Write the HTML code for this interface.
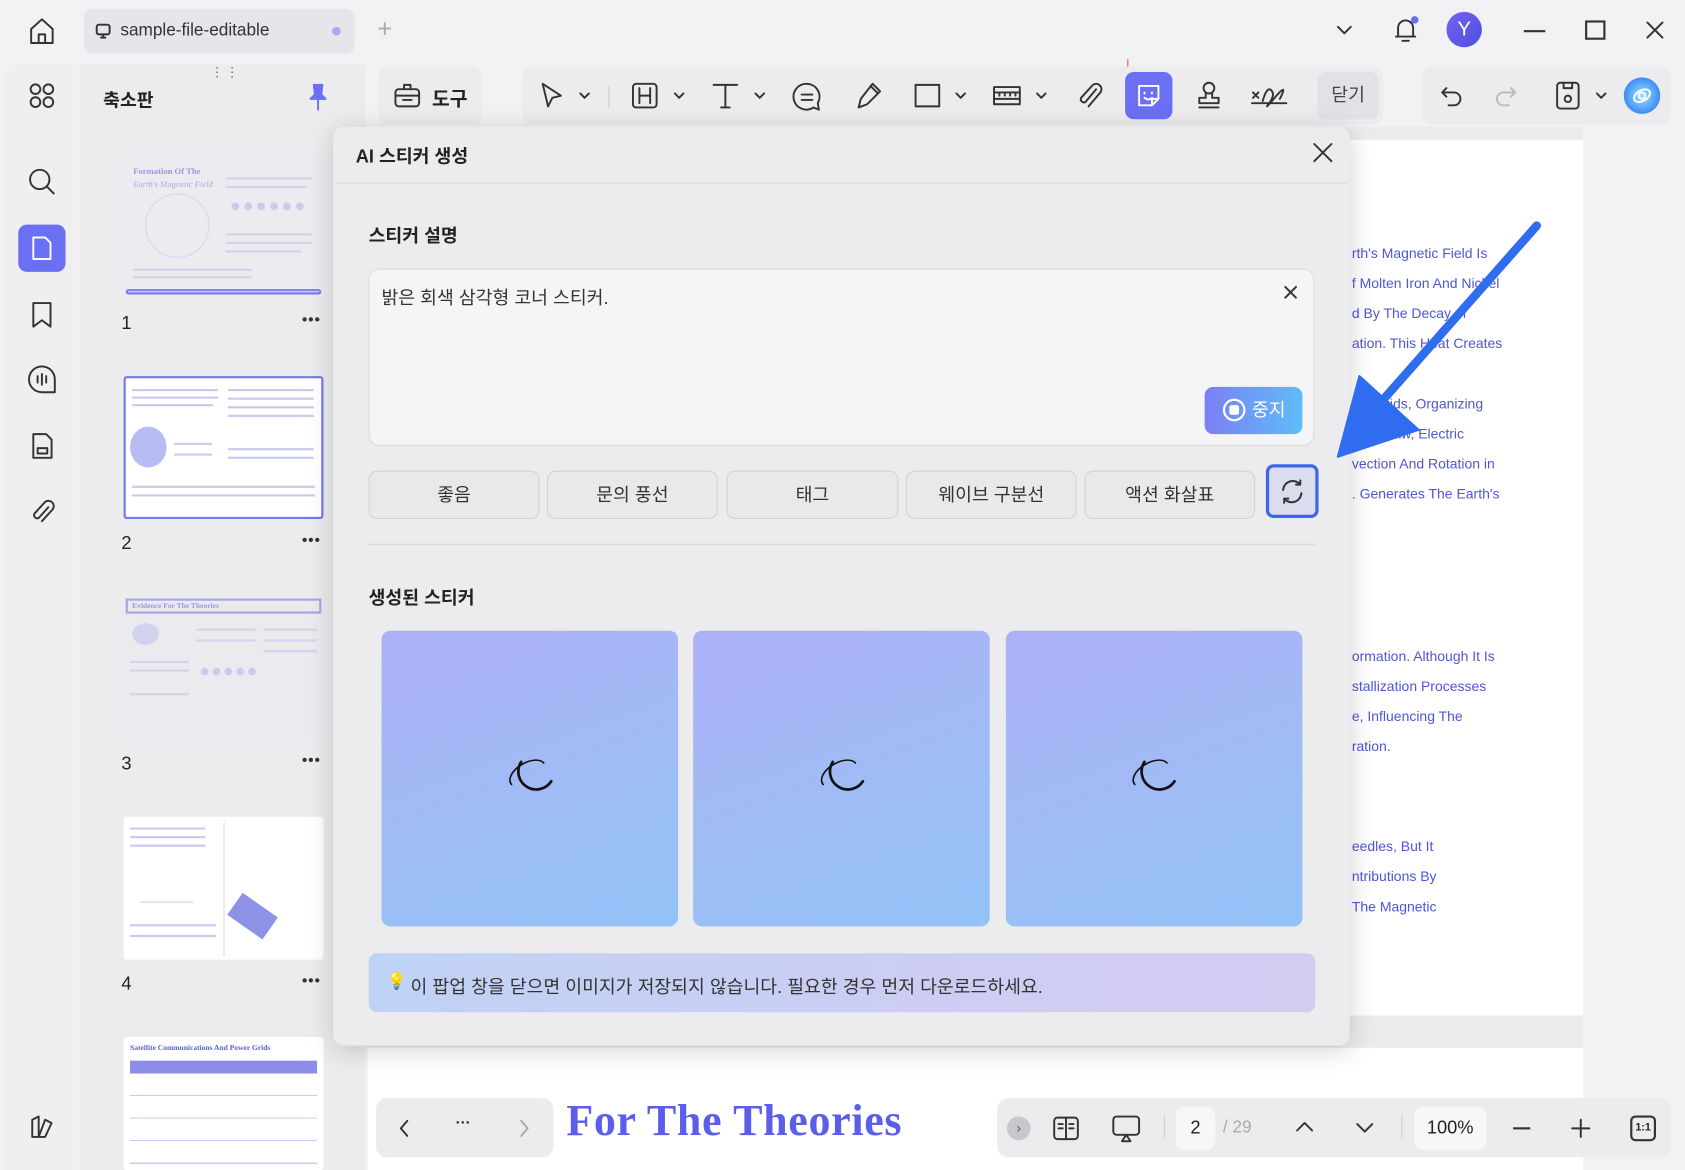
<!DOCTYPE html>
<html><head><meta charset="utf-8"><style>
*{box-sizing:border-box;margin:0;padding:0}
html,body{width:1685px;height:1170px;overflow:hidden;background:#f2f2f4}
#w{position:absolute;left:0;top:0;width:1568px;height:1089px;transform:scale(1.07462);transform-origin:0 0;font-family:"Liberation Sans","Noto Sans CJK KR",sans-serif;color:#222;background:#f2f2f4}
.a{position:absolute}
svg{position:absolute;fill:none;stroke:#333;stroke-width:1.8;stroke-linecap:round;stroke-linejoin:round}
.chip{position:absolute;top:438px;width:159px;height:45px;border:1px solid #d2d2d6;border-radius:8px;background:#e9e9ec;font-size:17px;text-align:center;line-height:44px;color:#333}
.img{position:absolute;top:587px;width:276px;height:275px;border-radius:8px;background:linear-gradient(160deg,#aeb0f6,#9ebdf6 60%,#93c2f7)}
.dt{position:absolute;left:1258px;font-size:13px;color:#4f55d6;white-space:nowrap}
.th{position:absolute;left:115px;width:186px;background:#fff;border-radius:3px;overflow:hidden}
.ln{position:absolute;height:2px;background:#c9cbee}
.num{position:absolute;left:113px;font-size:17px;color:#222}
.dots{position:absolute;left:281px;font-size:14px;letter-spacing:1px;font-weight:bold;color:#333}
.fog{position:absolute;left:0;top:0;right:0;bottom:0;background:rgba(225,225,230,.45)}
</style></head><body><div id="w">
<svg style="left:25px;top:15px" width="28" height="28" viewBox="0 0 28 28"><path d="M4 12 L14 3 L24 12 V25 H4 Z M11 25 V17 H17 V25"/></svg>
<div class="a" style="left:78px;top:8px;width:252px;height:42px;background:#e6e6ea;border-radius:8px"></div>
<svg style="left:88px;top:21px" width="16" height="16" viewBox="0 0 16 16"><rect x="2" y="2" width="12" height="9" rx="2"/><path d="M6 14h4M8 11v3"/></svg>
<div class="a" style="left:112px;top:20px;font-size:16px;color:#333">sample-file-editable</div>
<div class="a" style="left:309px;top:25px;width:8px;height:8px;border-radius:50%;background:#a9a9f4"></div>
<div class="a" style="left:351px;top:14px;font-size:24px;color:#aaa;font-weight:300">+</div>
<svg style="left:1242px;top:20px" width="18" height="16" viewBox="0 0 18 16"><path d="M3 5l6 6 6-6"/></svg>
<svg style="left:1295px;top:14px" width="26" height="28" viewBox="0 0 26 28"><path d="M6 20V12a7 7 0 0 1 14 0v8H4h18M10 24h6"/></svg>
<div class="a" style="left:1313px;top:15px;width:7px;height:7px;border-radius:50%;background:#6b6ff2"></div>
<div class="a" style="left:1346px;top:11px;width:33px;height:33px;border-radius:50%;background:linear-gradient(135deg,#7a5ff0,#4a52e0);color:#fff;font-size:19px;text-align:center;line-height:33px">Y</div>
<div class="a" style="left:1418px;top:28px;width:20px;height:2px;background:#333"></div>
<div class="a" style="left:1475px;top:19px;width:19px;height:18px;border:2px solid #333"></div>
<svg style="left:1530px;top:18px" width="20" height="20" viewBox="0 0 20 20"><path d="M3 3l14 14M17 3L3 17"/></svg>

<div class="a" style="left:6px;top:60px;width:66px;height:1029px;background:#efeff2;border-radius:10px 10px 0 0"></div>
<svg style="left:26px;top:76px" width="26" height="26" viewBox="0 0 26 26"><circle cx="7" cy="7" r="4.5"/><circle cx="19" cy="7" r="4.5"/><circle cx="7" cy="19" r="4.5"/><circle cx="19" cy="19" r="4.5"/></svg>
<svg style="left:25px;top:155px" width="28" height="28" viewBox="0 0 28 28"><circle cx="12" cy="12" r="9"/><path d="M19 19l6 6"/></svg>
<div class="a" style="left:17px;top:209px;width:44px;height:44px;border-radius:8px;background:#6a6ff3"></div>
<svg style="left:27px;top:218px;stroke:#fff" width="24" height="26" viewBox="0 0 24 26"><path d="M4 3h11l5 5v15H4z"/></svg>
<svg style="left:27px;top:279px" width="24" height="28" viewBox="0 0 24 28"><path d="M4 3h16v22l-8-6-8 6z"/></svg>
<svg style="left:24px;top:338px" width="30" height="30" viewBox="0 0 30 30"><path d="M15 3a12 12 0 1 0 0 24h12V15A12 12 0 0 0 15 3zM11 12v6M15 10v10M19 12v6"/></svg>
<svg style="left:26px;top:401px" width="26" height="28" viewBox="0 0 26 28"><path d="M5 3h12l5 5v17H5zM9 16h9v5H9z"/></svg>
<svg style="left:26px;top:462px" width="26" height="28" viewBox="0 0 26 28"><path d="M19 10L10 20a3 3 0 0 1-4-4L16 5a5 5 0 0 1 7 7L13 23"/></svg>
<svg style="left:26px;top:1036px" width="26" height="26" viewBox="0 0 26 26"><path d="M4 22V6l6-3v19zM10 22l6-16 6 3-6 13z"/></svg>

<div class="a" style="left:74px;top:60px;width:266px;height:1029px;background:#ececef"></div>
<div class="a" style="left:196px;top:60px;font-size:12px;color:#666;letter-spacing:2px">⋮⋮</div>
<div class="a" style="left:96px;top:79px;font-size:17px;font-weight:bold">축소판</div>
<svg style="left:286px;top:76px;stroke:#6a6ff3;fill:#6a6ff3" width="20" height="28" viewBox="0 0 20 28"><path d="M6 3h8l-1 9 4 4H3l4-4zM10 16v10"/></svg>

<div class="th" style="top:145px;height:130px;background:#f4f4f8">
 <div class="a" style="left:9px;top:10px;font:bold 8px 'Liberation Serif';color:#5a5fd8">Formation Of The</div>
 <div class="a" style="left:9px;top:22px;font:italic 8px 'Liberation Serif';color:#7c80e0">Earth's Magnetic Field</div>
 <div class="a" style="left:20px;top:35px;width:60px;height:60px;border-radius:50%;border:1px solid #cfd0ec"></div>
 <div class="ln" style="left:95px;top:20px;width:80px"></div><div class="ln" style="left:95px;top:28px;width:75px"></div>
 <div class="a" style="left:98px;top:42px;width:70px;height:10px;background:radial-gradient(circle,#b6b8f0 3px,transparent 4px) 0 0/12px 10px"></div>
 <div class="ln" style="left:95px;top:72px;width:80px"></div><div class="ln" style="left:95px;top:80px;width:80px"></div><div class="ln" style="left:95px;top:88px;width:70px"></div>
 <div class="ln" style="left:9px;top:105px;width:110px"></div><div class="ln" style="left:9px;top:112px;width:110px"></div>
 <div class="fog"></div>
 <div class="a" style="left:2px;top:124px;width:182px;height:5px;border:2px solid #7a7ee8;border-radius:3px"></div>
</div>
<div class="num" style="top:291px">1</div><div class="dots" style="top:289px">•••</div>

<div class="th" style="top:350px;height:133px;border:2px solid #7478e8">
 <div class="ln" style="left:6px;top:10px;width:80px"></div><div class="ln" style="left:6px;top:17px;width:80px"></div><div class="ln" style="left:6px;top:24px;width:75px"></div>
 <div class="a" style="left:4px;top:45px;width:34px;height:38px;border-radius:50%;background:#b9bcf3"></div>
 <div class="ln" style="left:45px;top:60px;width:35px"></div><div class="ln" style="left:45px;top:70px;width:35px"></div>
 <div class="ln" style="left:95px;top:10px;width:80px"></div><div class="ln" style="left:95px;top:18px;width:80px"></div><div class="ln" style="left:95px;top:26px;width:80px"></div><div class="ln" style="left:95px;top:34px;width:80px"></div>
 <div class="ln" style="left:95px;top:65px;width:80px"></div><div class="ln" style="left:95px;top:73px;width:80px"></div>
 <div class="ln" style="left:6px;top:100px;width:170px"></div><div class="ln" style="left:6px;top:108px;width:170px"></div>
</div>
<div class="num" style="top:496px">2</div><div class="dots" style="top:494px">•••</div>

<div class="th" style="top:555px;height:133px;background:#f2f2f6">
 <div class="a" style="left:2px;top:2px;width:182px;height:14px;border:2px solid #7478e8;font:bold 7px 'Liberation Serif';color:#5a5fd8;padding:1px 4px">Evidence For The Theories</div>
 <div class="a" style="left:8px;top:25px;width:25px;height:20px;border-radius:50%;background:#c5c7f3"></div>
 <div class="ln" style="left:6px;top:60px;width:55px"></div><div class="ln" style="left:6px;top:68px;width:55px"></div><div class="ln" style="left:6px;top:90px;width:55px"></div>
 <div class="ln" style="left:68px;top:30px;width:55px"></div><div class="ln" style="left:68px;top:40px;width:55px"></div>
 <div class="a" style="left:70px;top:65px;width:55px;height:10px;background:radial-gradient(circle,#b6b8f0 3px,transparent 4px) 0 0/11px 10px"></div>
 <div class="ln" style="left:130px;top:30px;width:50px"></div><div class="ln" style="left:130px;top:40px;width:50px"></div><div class="ln" style="left:130px;top:50px;width:50px"></div>
 <div class="fog"></div>
</div>
<div class="num" style="top:701px">3</div><div class="dots" style="top:699px">•••</div>

<div class="th" style="top:760px;height:133px">
 <div class="ln" style="left:6px;top:10px;width:70px"></div><div class="ln" style="left:6px;top:18px;width:70px"></div><div class="ln" style="left:6px;top:26px;width:70px"></div>
 <div class="a" style="left:15px;top:55px;width:50px;height:25px;border-bottom:1px solid #c9cbee"></div>
 <div class="a" style="left:93px;top:5px;width:1px;height:125px;background:#ddd"></div>
 <div class="a" style="left:100px;top:80px;width:40px;height:25px;background:#8e92e6;transform:rotate(35deg)"></div>
 <div class="ln" style="left:6px;top:100px;width:80px"></div><div class="ln" style="left:6px;top:110px;width:80px"></div>
</div>
<div class="num" style="top:906px">4</div><div class="dots" style="top:904px">•••</div>

<div class="th" style="top:965px;height:124px">
 <div class="a" style="left:6px;top:6px;font:bold 7px 'Liberation Serif';color:#5a5fd8">Satellite Communications And Power Grids</div>
 <div class="a" style="left:6px;top:22px;width:174px;height:12px;background:#8a8ee8"></div>
 <div class="a" style="left:6px;top:34px;width:174px;height:90px;background:repeating-linear-gradient(#fff 0 20px,#c9cbee 20px 21px)"></div>
</div>

<div class="a" style="left:342px;top:118px;width:1131px;height:971px;background:#ebebee"></div>
<div class="a" style="left:1236px;top:130px;width:237px;height:815px;background:#fff"></div>
<div class="a" style="left:342px;top:975px;width:1131px;height:114px;background:#fff"></div>
<div class="a" style="left:1049px;top:55px;width:1px;height:8px;background:#e06040"></div>
<div class="dt" style="top:228px">rth's Magnetic Field Is</div>
<div class="dt" style="top:256px">f Molten Iron And Nickel</div>
<div class="dt" style="top:284px">d By The Decay of</div>
<div class="dt" style="top:312px">ation. This Heat Creates</div>
<div class="dt" style="top:368px">ve Fluids, Organizing</div>
<div class="dt" style="top:396px">ere's Law, Electric</div>
<div class="dt" style="top:424px">vection And Rotation in</div>
<div class="dt" style="top:452px">. Generates The Earth's</div>
<div class="dt" style="top:603px">ormation. Although It Is</div>
<div class="dt" style="top:631px">stallization Processes</div>
<div class="dt" style="top:659px">e, Influencing The</div>
<div class="dt" style="top:687px">ration.</div>
<div class="dt" style="top:780px">eedles, But It</div>
<div class="dt" style="top:808px">ntributions By</div>
<div class="dt" style="top:836px">The Magnetic</div>
<div class="a" style="left:527px;top:1018px;font:bold 41px 'Liberation Serif',serif;color:#5a5ee8;letter-spacing:0.6px">For The Theories</div>

<div class="a" style="left:352px;top:62px;width:97px;height:54px;background:#ececef;border-radius:10px"></div>
<svg style="left:365px;top:74px" width="28" height="28" viewBox="0 0 28 28"><rect x="3" y="9" width="22" height="16" rx="3"/><path d="M3 15h22M11 9V5h6v4M10 19h8"/></svg>
<div class="a" style="left:402px;top:78px;font-size:18px;font-weight:bold">도구</div>
<div class="a" style="left:486px;top:62px;width:801px;height:54px;background:#ececef;border-radius:10px"></div>
<svg style="left:500px;top:75px" width="28" height="28" viewBox="0 0 28 28"><path d="M5 3l17 11-8 2-4 8z"/></svg>
<svg style="left:538px;top:84px" width="12" height="10" viewBox="0 0 12 10"><path d="M2 3l4 4 4-4"/></svg>
<div class="a" style="left:566px;top:80px;width:1px;height:20px;background:#ccc"></div>
<svg style="left:586px;top:75px" width="28" height="28" viewBox="0 0 28 28"><rect x="3" y="3" width="22" height="22" rx="3"/><path d="M9 7v14M19 7v14M9 14h10"/></svg>
<svg style="left:626px;top:84px" width="12" height="10" viewBox="0 0 12 10"><path d="M2 3l4 4 4-4"/></svg>
<svg style="left:661px;top:75px" width="28" height="28" viewBox="0 0 28 28"><path d="M3 4h22M14 4v21M10 25h8"/></svg>
<svg style="left:701px;top:84px" width="12" height="10" viewBox="0 0 12 10"><path d="M2 3l4 4 4-4"/></svg>
<svg style="left:736px;top:75px" width="30" height="30" viewBox="0 0 30 30"><path d="M15 3a12 12 0 1 0 6 22l5 2-1-6A12 12 0 0 0 15 3zM10 13h10M10 18h10"/></svg>
<svg style="left:794px;top:75px" width="28" height="28" viewBox="0 0 28 28"><path d="M18 3l7 7-12 12-8 3 2-8zM16 5l7 7"/></svg>
<svg style="left:849px;top:75px" width="28" height="28" viewBox="0 0 28 28"><rect x="3" y="4" width="22" height="20"/></svg>
<svg style="left:888px;top:84px" width="12" height="10" viewBox="0 0 12 10"><path d="M2 3l4 4 4-4"/></svg>
<svg style="left:922px;top:75px" width="30" height="28" viewBox="0 0 30 28"><rect x="3" y="6" width="24" height="16"/><path d="M3 11h24M3 17h24M8 11v3M13 11v3M18 11v3M23 11v3"/></svg>
<svg style="left:963px;top:84px" width="12" height="10" viewBox="0 0 12 10"><path d="M2 3l4 4 4-4"/></svg>
<svg style="left:1000px;top:75px" width="28" height="28" viewBox="0 0 28 28"><path d="M20 8L10 20a3 3 0 0 1-4-4L17 4a5 5 0 0 1 7 7L13 24"/></svg>
<div class="a" style="left:1047px;top:67px;width:44px;height:44px;border-radius:8px;background:#6a6ff3"></div>
<svg style="left:1055px;top:75px;stroke:#fff" width="28" height="28" viewBox="0 0 28 28"><path d="M5 5h18v12l-6 6H5zM23 17h-6v6M10 11v1M17 11v1M10 16q4 3 7 0"/></svg>
<svg style="left:1111px;top:74px" width="28" height="30" viewBox="0 0 28 30"><circle cx="14" cy="8" r="5"/><path d="M11 13v4H5v5h18v-5h-6v-4M5 26h18"/></svg>
<svg style="left:1163px;top:74px" width="36" height="30" viewBox="0 0 36 30"><path d="M3 12l5 5M8 12l-5 5M2 22h32M12 20q4-14 8-10t-2 12 6-6 4 2"/></svg>
<div class="a" style="left:1226px;top:67px;width:57px;height:44px;border-radius:8px;background:#e2e2e6;font-size:17px;text-align:center;line-height:44px;color:#444">닫기</div>
<div class="a" style="left:1323px;top:62px;width:232px;height:54px;background:#ececef;border-radius:10px"></div>
<svg style="left:1338px;top:76px" width="26" height="26" viewBox="0 0 26 26"><path d="M8 6L4 10l4 4M4 10h11a6 6 0 0 1 0 12H10"/></svg>
<svg style="left:1388px;top:76px;stroke:#bbb" width="26" height="26" viewBox="0 0 26 26"><path d="M18 6l4 4-4 4M22 10H11a6 6 0 0 0 0 12h5"/></svg>
<svg style="left:1445px;top:74px" width="28" height="30" viewBox="0 0 28 30"><rect x="4" y="3" width="20" height="24" rx="3"/><path d="M10 3v5h8V3"/><circle cx="14" cy="18" r="3"/></svg>
<svg style="left:1484px;top:84px" width="12" height="10" viewBox="0 0 12 10"><path d="M2 3l4 4 4-4"/></svg>
<div class="a" style="left:1511px;top:72px;width:34px;height:34px;border-radius:50%;background:radial-gradient(circle,#9be2ff,#3d8cf5 70%,#3a6be8)"></div>
<svg style="left:1517px;top:78px;stroke:#fff" width="22" height="22" viewBox="0 0 22 22"><ellipse cx="11" cy="11" rx="8" ry="5" transform="rotate(-30 11 11)"/><circle cx="11" cy="11" r="3"/></svg>

<div class="a" style="left:350px;top:1022px;width:165px;height:55px;background:#ececef;border-radius:10px"></div>
<svg style="left:368px;top:1040px" width="16" height="20" viewBox="0 0 16 20"><path d="M11 3l-6 7 6 7"/></svg>
<div class="a" style="left:424px;top:1036px;font-size:14px;font-weight:bold">···</div>
<svg style="left:480px;top:1040px;stroke:#aaa" width="16" height="20" viewBox="0 0 16 20"><path d="M5 3l6 7-6 7"/></svg>
<div class="a" style="left:928px;top:1022px;width:627px;height:55px;background:#ececef;border-radius:10px"></div>
<div class="a" style="left:937px;top:1039px;width:22px;height:22px;border-radius:50%;background:#c8c8cc;color:#555;font-size:13px;text-align:center;line-height:22px">›</div>
<svg style="left:978px;top:1036px" width="28" height="28" viewBox="0 0 28 28"><rect x="3" y="4" width="22" height="20" rx="3"/><path d="M14 4v20M7 10h4M7 14h4M17 10h4M17 14h4"/></svg>
<svg style="left:1033px;top:1035px" width="30" height="30" viewBox="0 0 30 30"><rect x="3" y="4" width="24" height="17" rx="3"/><path d="M15 21l-4 6h8z"/></svg>
<div class="a" style="left:1083px;top:1038px;width:1px;height:22px;background:#ccc"></div>
<div class="a" style="left:1094px;top:1030px;width:37px;height:40px;border-radius:8px;background:#f7f7f9;font-size:17px;text-align:center;line-height:40px">2</div>
<div class="a" style="left:1138px;top:1041px;font-size:16px;color:#aaa">/ 29</div>
<svg style="left:1204px;top:1040px" width="20" height="16" viewBox="0 0 20 16"><path d="M3 12l7-7 7 7"/></svg>
<svg style="left:1260px;top:1042px" width="20" height="16" viewBox="0 0 20 16"><path d="M3 4l7 7 7-7"/></svg>
<div class="a" style="left:1304px;top:1038px;width:1px;height:22px;background:#ccc"></div>
<div class="a" style="left:1316px;top:1030px;width:67px;height:40px;border-radius:8px;background:#f7f7f9;font-size:17px;text-align:center;line-height:40px">100%</div>
<div class="a" style="left:1408px;top:1049px;width:16px;height:2px;background:#333"></div>
<svg style="left:1461px;top:1040px" width="20" height="20" viewBox="0 0 20 20"><path d="M10 2v16M2 10h16"/></svg>
<div class="a" style="left:1517px;top:1038px;width:24px;height:24px;border:2px solid #333;border-radius:5px;font-size:10px;text-align:center;line-height:20px;font-weight:bold">1:1</div>

<div class="a" style="left:310px;top:118px;width:946px;height:855px;background:#ececee;border-radius:10px;box-shadow:0 4px 24px rgba(0,0,0,.18)"></div>
<div class="a" style="left:331px;top:131px;font-size:17px;font-weight:bold">AI 스티커 생성</div>
<svg style="left:1220px;top:131px" width="22" height="22" viewBox="0 0 22 22"><path d="M3 3l16 16M19 3L3 19"/></svg>
<div class="a" style="left:312px;top:170px;width:942px;height:1px;background:#dcdce0"></div>
<div class="a" style="left:343px;top:205px;font-size:17px;font-weight:bold">스티커 설명</div>
<div class="a" style="left:343px;top:250px;width:880px;height:165px;background:#f5f5f7;border:1px solid #dcdce0;border-radius:10px"></div>
<div class="a" style="left:355px;top:263px;font-size:17px;color:#333">밝은 회색 삼각형 코너 스티커.</div>
<svg style="left:1194px;top:265px" width="14" height="14" viewBox="0 0 14 14"><path d="M2 2l10 10M12 2L2 12"/></svg>
<div class="a" style="left:1121px;top:360px;width:91px;height:44px;border-radius:8px;background:linear-gradient(90deg,#7b7ff6,#5ebdf9);color:#fff;font-size:17px;line-height:44px;padding-left:44px">중지</div>
<div class="a" style="left:1138px;top:371px;width:21px;height:21px;border:2px solid #fff;border-radius:50%"></div>
<div class="a" style="left:1144px;top:377px;width:9px;height:9px;background:#fff;border-radius:2px"></div>
<div class="chip" style="left:343px">좋음</div>
<div class="chip" style="left:509px">문의 풍선</div>
<div class="chip" style="left:676px;width:160px">태그</div>
<div class="chip" style="left:843px">웨이브 구분선</div>
<div class="chip" style="left:1009px">액션 화살표</div>
<div class="a" style="left:1178px;top:432px;width:49px;height:50px;border:3px solid #3a67ea;border-radius:7px;background:#dcdcef"></div>
<svg style="left:1189px;top:444px" width="27" height="27" viewBox="0 0 27 27"><path d="M5 12a9 9 0 0 1 16-5M22 15a9 9 0 0 1-16 5M21 3v4h-4M6 24v-4h4"/></svg>
<div class="a" style="left:343px;top:506px;width:881px;height:1px;background:#d6d6da"></div>
<div class="a" style="left:343px;top:542px;font-size:17px;font-weight:bold">생성된 스티커</div>
<div class="img" style="left:355px"></div>
<div class="img" style="left:645px"></div>
<div class="img" style="left:936px"></div>
<svg style="left:467px;top:700px;stroke:#111;stroke-width:2.5" width="52" height="52" viewBox="0 0 52 52"><path d="M18 9a16 16 0 1 0 28 18"/><path d="M9 30a16 9 -30 0 1 30-20" stroke-width="1.5"/></svg>
<svg style="left:757px;top:700px;stroke:#111;stroke-width:2.5" width="52" height="52" viewBox="0 0 52 52"><path d="M18 9a16 16 0 1 0 28 18"/><path d="M9 30a16 9 -30 0 1 30-20" stroke-width="1.5"/></svg>
<svg style="left:1047px;top:700px;stroke:#111;stroke-width:2.5" width="52" height="52" viewBox="0 0 52 52"><path d="M18 9a16 16 0 1 0 28 18"/><path d="M9 30a16 9 -30 0 1 30-20" stroke-width="1.5"/></svg>
<div class="a" style="left:343px;top:887px;width:881px;height:55px;border-radius:8px;background:linear-gradient(90deg,#bfd2f5,#cdcdf3 60%,#d3ccf1)"></div>
<div class="a" style="left:360px;top:904px;font-size:15px">💡</div>
<div class="a" style="left:382px;top:904px;font-size:17px;color:#333">이 팝업 창을 닫으면 이미지가 저장되지 않습니다. 필요한 경우 먼저 다운로드하세요.</div>

<svg style="left:1235px;top:200px;stroke:#2f6cf0;stroke-width:8;fill:#2f6cf0" width="210" height="240" viewBox="0 0 210 240"><path d="M195 10L45 180"/><path d="M10 225L30 150L85 200Z" stroke-width="2"/></svg>
</div></body></html>
